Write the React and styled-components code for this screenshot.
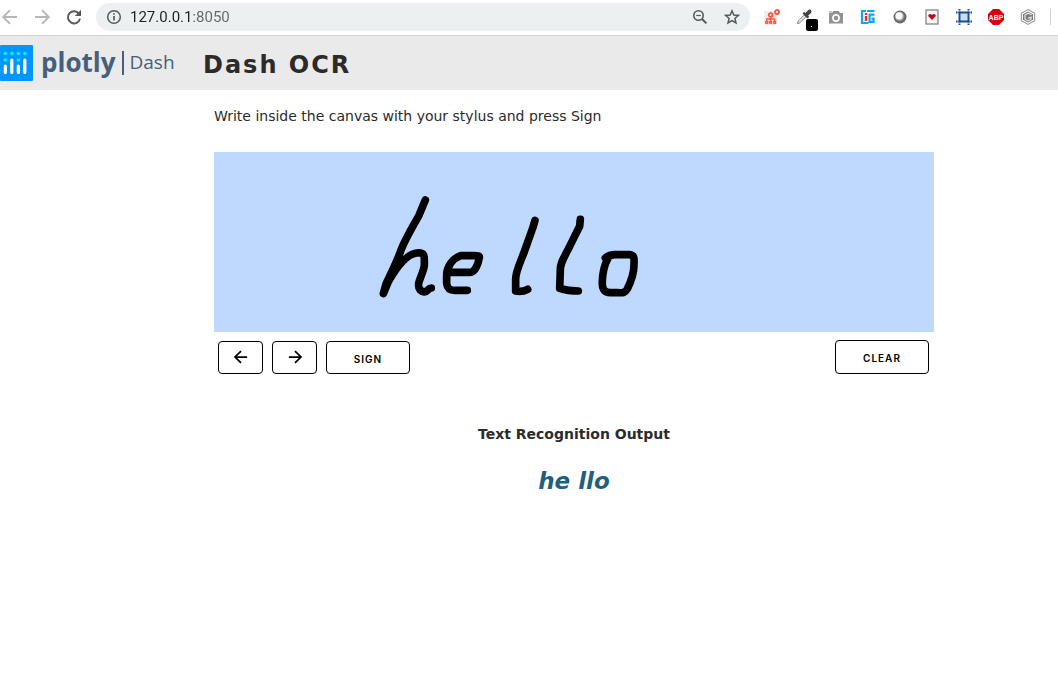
import React from "react";
import styled, { createGlobalStyle } from "styled-components";

const GlobalStyle = createGlobalStyle`
  * { box-sizing: border-box; }
  body {
    margin: 0;
    background: #fff;
    color: #2b2b2b;
    font-family: Verdana, "DejaVu Sans", sans-serif;
  }
`;

const BrowserBar = styled.div`
  display: flex;
  align-items: center;
  gap: 12px;
  height: 36px;
  padding: 0 7px 2px 0;
  border-bottom: 1px solid #d3d3d3;
`;

const IconButton = styled.button`
  flex: none;
  display: grid;
  place-items: center;
  width: 20px;
  height: 28px;
  padding: 0;
  border: 0;
  background: none;
  color: ${(p) => (p.$muted ? "#b4b6b9" : "#55595e")};

  svg { overflow: visible; }
`;

const AddressBar = styled.div`
  flex: 1;
  display: flex;
  align-items: center;
  gap: 6px;
  min-width: 0;
  height: 28px;
  padding: 0 8px;
  border-radius: 14px;
  background: #ecf0f1;
`;

const AddressInput = styled.input`
  flex: 1;
  min-width: 0;
  padding: 0;
  border: 0;
  outline: 0;
  font: 15px Roboto, sans-serif;
  color: transparent;
  background: linear-gradient(to right, #202124 64px, #63676b 64px);
  background-clip: text;
  -webkit-background-clip: text;
`;

const AddressActions = styled.div`
  display: flex;
  gap: 12px;
`;

const Divider = styled.span`
  width: 1px;
  height: 16px;
  background: #cfcfcf;
`;

const Header = styled.header`
  display: flex;
  align-items: center;
  height: 54px;
  background: #eaeaea;
`;

const Brand = styled.a`
  flex: none;
  display: flex;
  align-items: center;
  width: 203px;
  color: #45607d;
  text-decoration: none;
  font-family: "Open Sans", sans-serif;
`;

const BrandName = styled.span`
  margin-left: 8px;
  padding-bottom: 2px;
  font-size: 26px;
  font-weight: 700;
  line-height: 34px;
`;

const BrandProduct = styled.span`
  margin-left: 6px;
  padding: 0 0 2px 6px;
  border-left: 2px solid #45607d;
  font-size: 19px;
  line-height: 22px;
`;

const Title = styled.h1`
  margin: 0;
  padding-top: 4px;
  font-size: 24px;
  line-height: 32px;
  letter-spacing: 2px;
`;

const Main = styled.main`
  padding: 14px 124px 0 214px;
`;

const Instructions = styled.p`
  margin: 0 0 24px;
  font-size: 14px;
  line-height: 24px;
`;

const Stage = styled.div`
  height: 180px;
  background: #bfd9fe;

  svg { display: block; width: 100%; height: 100%; }
`;

const Controls = styled.div`
  display: flex;
  align-items: flex-end;
  gap: 9px;
  padding: 8px 5px 0 4px;
`;

const ControlButton = styled.button`
  display: grid;
  place-items: center;
  width: ${(p) => p.$width};
  height: ${(p) => (p.$end ? "34px" : "33px")};
  margin-left: ${(p) => (p.$end ? "auto" : "0")};
  padding: ${(p) => (p.$icon ? "0 0 2px" : "2px 0 0")};
  border: 1px solid #000;
  border-radius: 4px;
  background: #fff;
  color: #000;
  font: 600 10px Inter, sans-serif;
  letter-spacing: 1px;
  text-transform: uppercase;
`;

const Output = styled.section`
  padding-top: 48px;
  text-align: center;
`;

const OutputTitle = styled.h2`
  margin: 0;
  font-size: 14px;
  line-height: 24px;
`;

const OutputText = styled.p`
  margin: 18px 0 0;
  color: #1f5f7f;
  font-size: 23px;
  font-style: italic;
  font-weight: 700;
  line-height: 34px;
`;

const Arrow = ({ flip, size = 16, weight = 2 }) => (
  <svg width={size} height={size} viewBox="0 0 16 16" fill="none" stroke="currentColor" strokeWidth={weight}>
    <path d={flip ? "M1 8H14.5M8 1.2L14.8 8L8 14.8" : "M15 8H1.5M8 1.2L1.2 8L8 14.8"} />
  </svg>
);

const Reload = () => (
  <svg width="16" height="16" viewBox="0 0 16 16">
    <path d="M13.2 5A6.1 6.1 0 1 0 14 9.6" fill="none" stroke="currentColor" strokeWidth="2" />
    <path d="M15 .8V7H8.8Z" fill="currentColor" />
  </svg>
);

const Info = () => (
  <svg width="20" height="16" viewBox="0 0 20 16" fill="none" stroke="#55595e">
    <circle cx="10" cy="8" r="6.3" strokeWidth="1.5" />
    <path d="M10 7V11.6M10 4.2V5.8" strokeWidth="1.7" />
  </svg>
);

const ZoomOut = () => (
  <svg width="16" height="16" viewBox="0 0 16 16" fill="none" stroke="currentColor">
    <circle cx="6.5" cy="6.5" r="4.7" strokeWidth="1.6" />
    <path d="M10 10L14.4 14.4" strokeWidth="2" />
    <path d="M4.2 6.5H8.8" strokeWidth="1.2" />
  </svg>
);

const Star = () => (
  <svg width="16" height="16" viewBox="0 0 16 16" fill="none" stroke="currentColor" strokeWidth="1.5">
    <path d="M8 1.8L9.8 6L14.4 6.4L10.9 9.4L12 13.9L8 11.5L4 13.9L5.1 9.4L1.6 6.4L6.2 6Z" />
  </svg>
);

const SiteMap = () => (
  <svg width="16" height="16" viewBox="0 0 16 16" fill="none" stroke="#fa573c">
    <rect x="0" y="2" width="13" height="14" rx="1" fill="#eee" stroke="none" />
    <circle cx="6.6" cy="6" r="1.9" strokeWidth="1.8" />
    <path d="M6.6 8V12M2.7 12V10H10.6V12" strokeWidth="1.3" />
    <circle cx="2.7" cy="13.3" r="1.1" strokeWidth="1.5" />
    <circle cx="6.6" cy="13.3" r="1.1" strokeWidth="1.5" />
    <circle cx="10.6" cy="13.3" r="1.1" strokeWidth="1.5" />
    <circle cx="13" cy="3" r="2" strokeWidth="1.9" fill="#fff" />
  </svg>
);

const Eyedropper = () => (
  <svg width="16" height="16" viewBox="0 0 16 16">
    <path d="M1.3 14.7L2.2 12L8.3 6L10 7.7L4 13.8Z" fill="#e4e8ea" stroke="#888" />
    <path d="M6.5 4.5L8.2 2.8L9.4 4L12 1.2C14-.6 16.8 2 14.9 4L12.1 6.7L13.2 7.9L11.5 9.5Z" fill="#444" />
    <rect x="10" y="10" width="12" height="12" rx="2" fill="#000" />
    <rect x="15" y="17" width="1" height="1" fill="#fff" />
  </svg>
);

const Camera = () => (
  <svg width="16" height="16" viewBox="0 0 16 16">
    <path d="M1 4H4L5.3 2H10.7L12 4H15V14.5H1Z" fill="#929292" />
    <rect x="1" y="2.4" width="3" height="1" fill="#929292" />
    <circle cx="8" cy="9" r="3.1" fill="#929292" stroke="#fff" strokeWidth="1.6" />
  </svg>
);

const BlockMark = () => (
  <svg width="16" height="16" viewBox="0 0 16 16">
    <path d="M6 2H2V14H8.5M7 2H14.5M14.5 5.6H9.6V12.8H13.6V9.6H11.5" fill="none" stroke="#09a7ed" strokeWidth="2.2" />
    <rect x="4.8" y="4" width="2.3" height="2" fill="#f22" />
    <rect x="4.8" y="7" width="2.3" height="5" fill="#f22" />
  </svg>
);

const Orb = () => (
  <svg width="16" height="16" viewBox="0 0 16 16">
    <circle cx="8" cy="8" r="6.5" fill="#686868" />
    <circle cx="7.6" cy="7.5" r="4.7" fill="#999" />
    <circle cx="7.1" cy="6.9" r="3.6" fill="#f6f6f6" />
  </svg>
);

const HeartCard = () => (
  <svg width="16" height="16" viewBox="0 0 16 16">
    <rect x="2" y="1" width="12" height="14" fill="#f5f5f5" stroke="#8b8585" strokeWidth="1.3" />
    <path d="M8 11L4.3 7.3C3.8 5.2 6.4 4.1 8 6C9.6 4.1 12.2 5.2 11.7 7.3Z" fill="#bd0a12" />
  </svg>
);

const Frame = () => (
  <svg width="16" height="16" viewBox="0 0 16 16" fill="none">
    <rect x="3" y="3" width="10" height="10" fill="#c7e0f8" />
    <path d="M3.5 0V16M12.5 0V16M0 3.5H16M0 12.5H16" stroke="#1b4a8c" strokeWidth="1.9" strokeDasharray="1.6 .6 11.6 .6 1.6" />
  </svg>
);

const AbpText = styled.text`
  fill: #fff;
  font: 700 7px "Liberation Sans", sans-serif;
`;

const AdBlock = () => (
  <svg width="16" height="16" viewBox="0 0 16 16">
    <path d="M5 0H11L16 5V11L11 16H5L0 11V5Z" fill="#d6000f" />
    <AbpText x="8" y="10.5" textAnchor="middle">ABP</AbpText>
  </svg>
);

const Cube = () => (
  <svg width="16" height="16" viewBox="0 0 16 16" fill="none">
    <path d="M8 .6L14.6 4.3V11.7L8 15.4L1.4 11.7V4.3Z" stroke="#999" strokeWidth="1.1" />
    <path d="M8 2.4L13 5.2V10.8L8 13.6L3 10.8V5.2Z" fill="#7d7d7d" />
    <path d="M11.6 5.8L8.2 4.2L5 6V10.2L8 11.9L11 10.2V8.2L8 9.2" stroke="#e8e8e8" strokeWidth="1.2" />
  </svg>
);

const PlotlyMark = () => (
  <svg width="33" height="36" viewBox="0 0 33 36">
    <rect width="33" height="36" rx="1" fill="#0095ff" />
    <g fill="#00f5ff">
      <circle cx="5.3" cy="8.5" r="1.8" />
      <circle cx="11.8" cy="8.5" r="1.8" />
      <circle cx="18.3" cy="8.5" r="1.8" />
      <circle cx="24.8" cy="8.5" r="1.8" />
      <circle cx="5.3" cy="15" r="1.8" />
      <circle cx="18.3" cy="15" r="1.8" />
    </g>
    <path d="M5.3 21V27.5M11.8 15V27.5M18.3 21V27.5M24.8 15V27.5" stroke="#fff" strokeWidth="3.2" strokeLinecap="round" />
  </svg>
);

const Handwriting = () => (
  <svg viewBox="0 0 720 180" preserveAspectRatio="xMidYMid meet" role="img" aria-label="Handwritten word">
    <g
      transform="translate(156 33) scale(.3333)"
      fill="none"
      stroke="#000"
      strokeWidth="23"
      strokeLinecap="round"
      strokeLinejoin="round"
    >
      <path d="M166 45L147 91C130 122 107 160 93 195C83 226 58 275 48 297L40 326L55 290C78 250 110 207 140 204C167 201 163 214 163 242C160 262 149 280 146 295C144 315 154 320 163 321C174 320 174 309 184 309" />
      <path d="M240 262H300C316 262 325 235 328 218C329 212 322 212 314 212H272C248 220 230 245 230 270V295C232 313 242 316 255 316H292" />
      <path d="M495 106L489 127L463 200C450 235 437 259 437 282V318C447 320 462 319 473 313" />
      <path d="M631 103L629 124L600 182C585 215 570 230 571 258L569 310C588 316 606 318 625 318" />
      <path d="M706 219C715 212 723 209 735 209H778C796 211 792 222 792 241C792 265 783 290 772 312C763 326 757 323 742 323H722C700 323 696 309 697 290C698 260 703 240 713 222" />
    </g>
  </svg>
);

const extensions = [
  ["Site map", SiteMap],
  ["Color picker", Eyedropper],
  ["Screenshot", Camera],
  ["Blocks", BlockMark],
  ["Orb", Orb],
  ["Cards", HeartCard],
  ["Frame", Frame],
  ["Ad blocker", AdBlock],
  ["Cube", Cube],
];

export default function App() {
  return (
    <>
      <GlobalStyle />
      <BrowserBar>
        <IconButton $muted aria-label="Back"><Arrow weight={1.8} /></IconButton>
        <IconButton $muted aria-label="Forward"><Arrow flip weight={1.8} /></IconButton>
        <IconButton aria-label="Reload"><Reload /></IconButton>
        <AddressBar>
          <Info />
          <AddressInput aria-label="Address" defaultValue="127.0.0.1:8050" />
          <AddressActions>
            <IconButton aria-label="Zoom"><ZoomOut /></IconButton>
            <IconButton aria-label="Bookmark"><Star /></IconButton>
          </AddressActions>
        </AddressBar>
        {extensions.map(([name, Icon]) => (
          <IconButton key={name} aria-label={name}><Icon /></IconButton>
        ))}
        <Divider />
      </BrowserBar>
      <Header>
        <Brand href="#">
          <PlotlyMark />
          <BrandName>plotly</BrandName>
          <BrandProduct>Dash</BrandProduct>
        </Brand>
        <Title>Dash OCR</Title>
      </Header>
      <Main>
        <Instructions>Write inside the canvas with your stylus and press Sign</Instructions>
        <Stage><Handwriting /></Stage>
        <Controls>
          <ControlButton $width="45px" $icon aria-label="Undo"><Arrow size={14} /></ControlButton>
          <ControlButton $width="45px" $icon aria-label="Redo"><Arrow flip size={14} /></ControlButton>
          <ControlButton $width="84px">Sign</ControlButton>
          <ControlButton $width="94px" $end>Clear</ControlButton>
        </Controls>
        <Output>
          <OutputTitle>Text Recognition Output</OutputTitle>
          <OutputText>he llo</OutputText>
        </Output>
      </Main>
    </>
  );
}
